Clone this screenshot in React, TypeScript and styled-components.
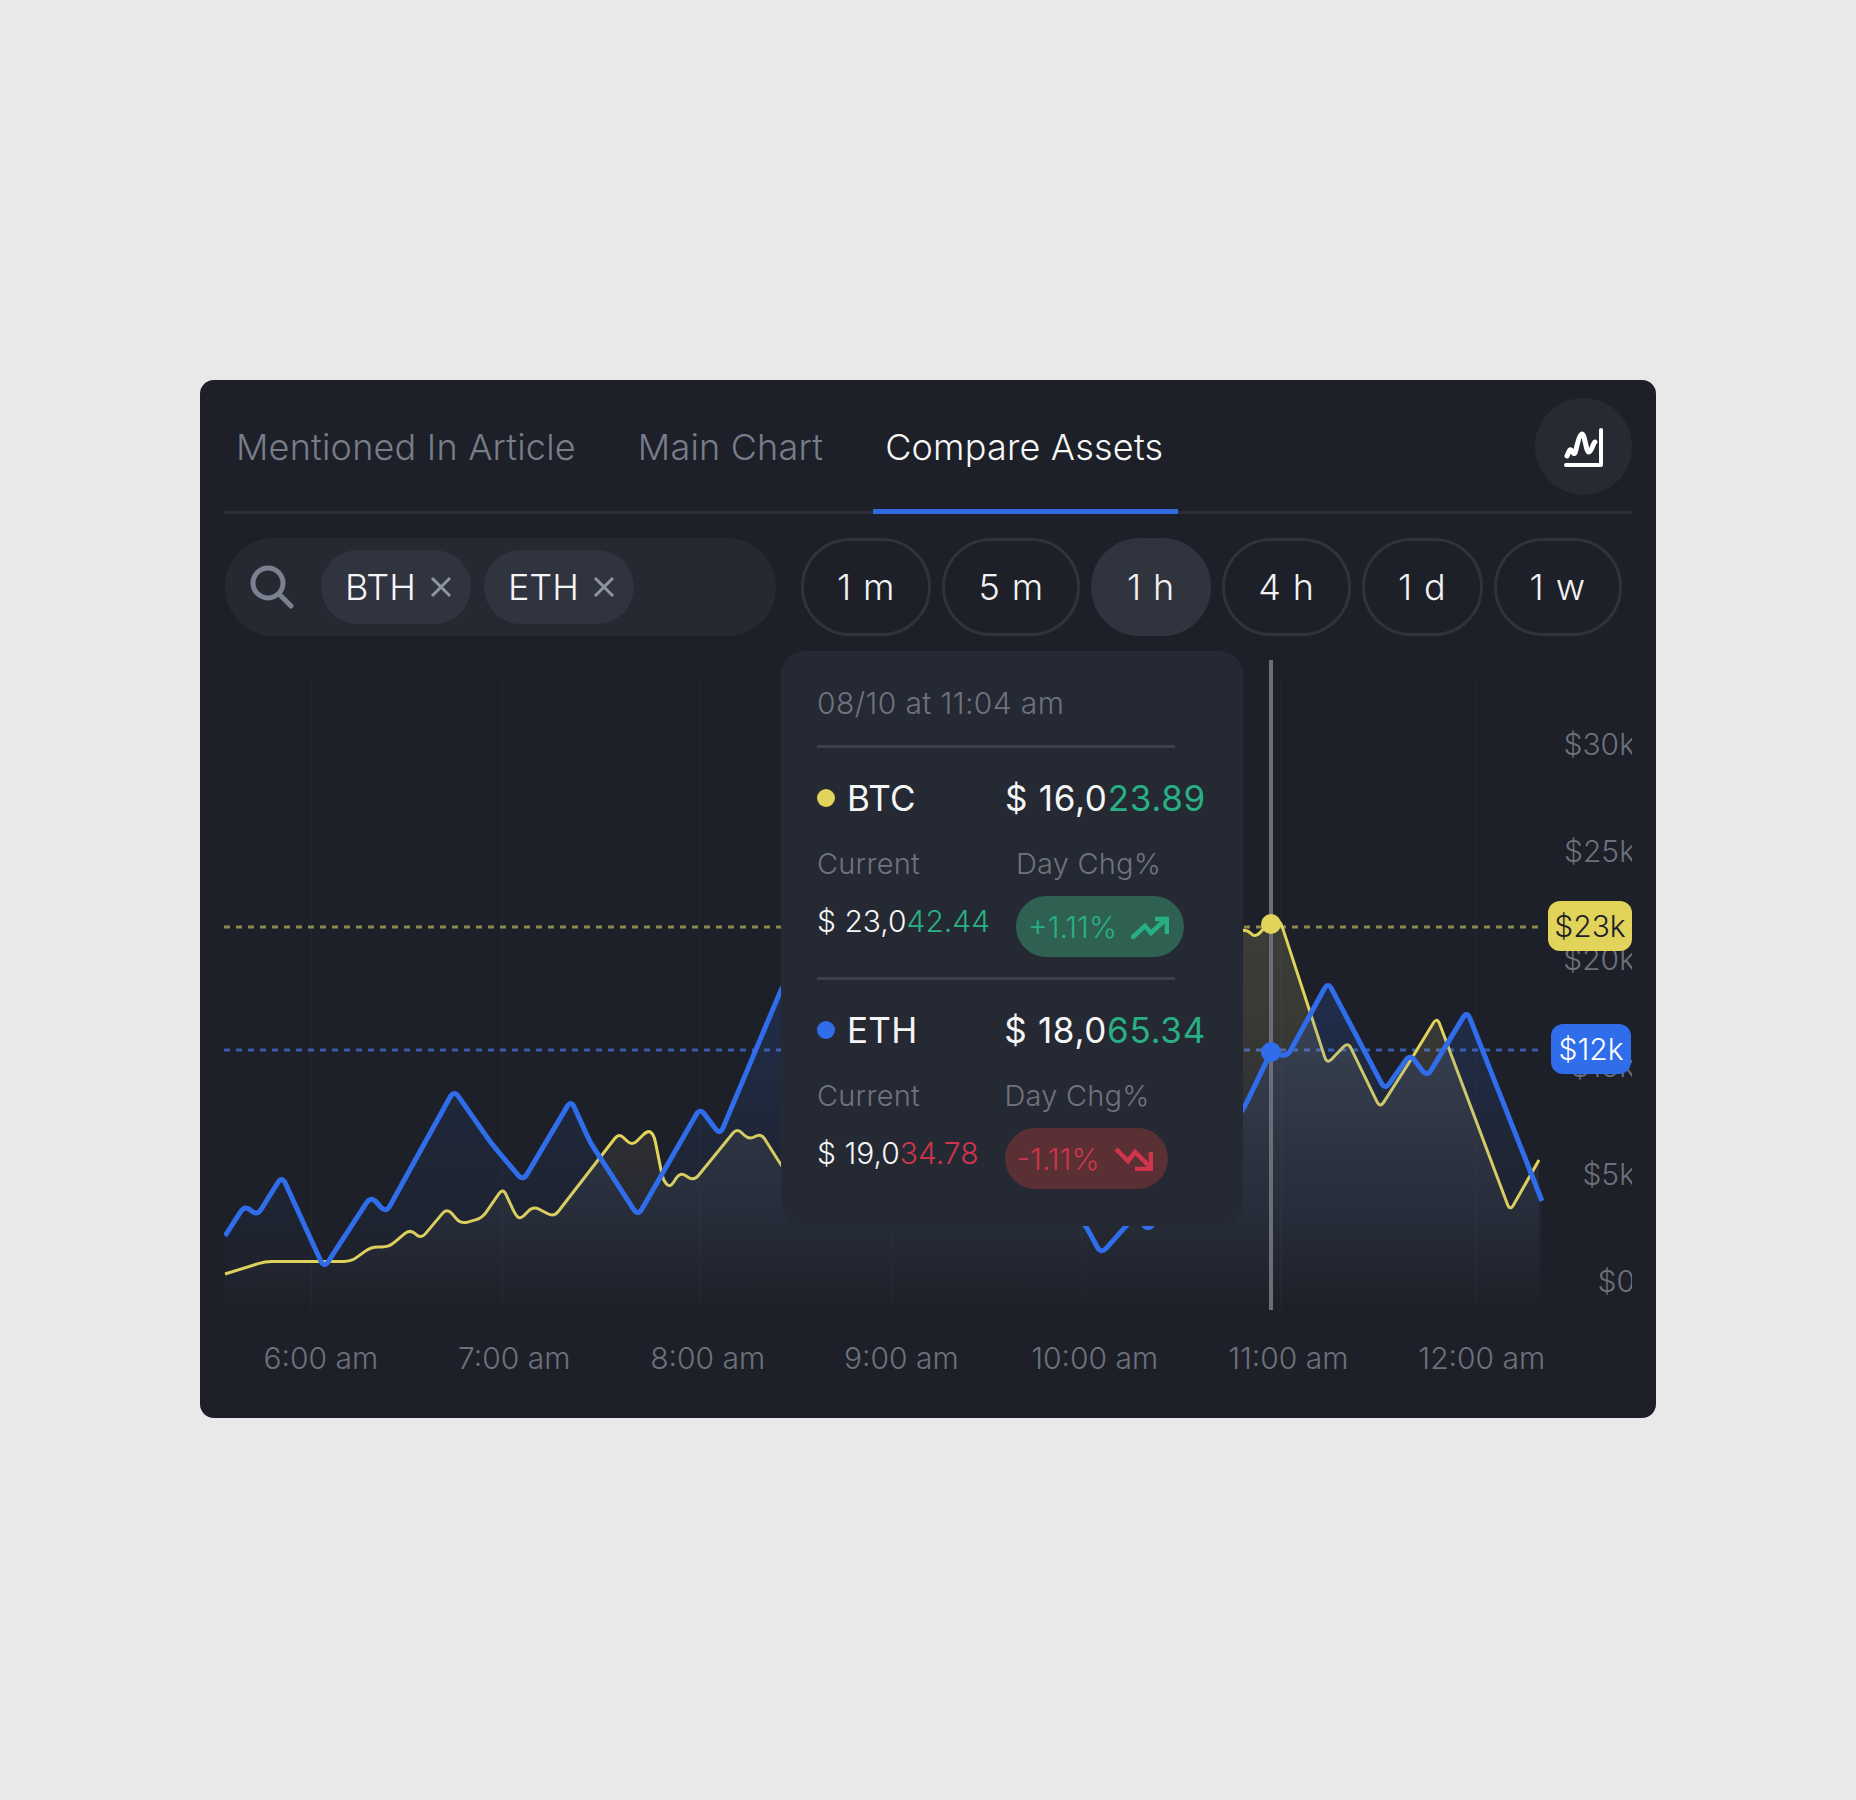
import styled, { createGlobalStyle } from "styled-components";

const GlobalStyle = createGlobalStyle`
  * { box-sizing: border-box; }
  body {
    margin: 0;
    background: #e9e9e9;
    font-family: "Inter", "Liberation Sans", sans-serif;
  }
`;

const Page = styled.div`
  height: 1798px;
  display: flex;
  align-items: center;
  justify-content: center;
`;

const Card = styled.div`
  width: 1456px;
  height: 1038px;
  padding: 0 24px;
  border-radius: 14px;
  background: #1d2028;
`;

const Header = styled.div`
  height: 134px;
  display: flex;
  align-items: center;
  gap: 38px;
  border-bottom: 3px solid #2a2d35;
`;

const Tab = styled.div<{ $active?: boolean }>`
  position: relative;
  height: 100%;
  padding: 2px 12px 0;
  display: flex;
  align-items: center;
  font-size: 36px;
  font-weight: 300;
  letter-spacing: 0.2px;
  color: ${(props) => (props.$active ? "#f6f6f7" : "#787d8a")};
  &::after {
    content: "";
    display: ${(props) => (props.$active ? "block" : "none")};
    position: absolute;
    left: 0;
    right: -3px;
    bottom: -3px;
    height: 5px;
    background: #2f6ae0;
  }
`;

const IconButton = styled.div`
  width: 97px;
  height: 97px;
  margin: 2px 0 0 auto;
  border-radius: 50%;
  background: #272a32;
  display: flex;
  align-items: center;
  justify-content: center;
`;

const Controls = styled.div`
  margin-top: 24px;
  padding-left: 1px;
  display: flex;
  gap: 25px;
`;

const Search = styled.div`
  width: 551px;
  height: 98px;
  flex: none;
  padding-left: 25px;
  border-radius: 49px;
  background: #262932;
  display: flex;
  align-items: center;
  gap: 13px;
`;

const SearchIcon = styled.svg`
  width: 44px;
  height: 44px;
  margin-right: 14px;
  flex: none;
`;

const Chip = styled.div`
  height: 74px;
  padding: 0 19px 0 24px;
  border-radius: 37px;
  background: #30343f;
  display: flex;
  align-items: center;
  gap: 14px;
  font-size: 36px;
  font-weight: 300;
  color: #f6f6f7;
`;

const Frames = styled.div`
  display: flex;
  gap: 11px;
`;

const Frame = styled.div<{ $active?: boolean }>`
  height: 98px;
  padding: 0 33px;
  flex: none;
  white-space: nowrap;
  border-radius: 49px;
  border: 3px solid ${(props) => (props.$active ? "#30343f" : "#30333c")};
  background: ${(props) => (props.$active ? "#30343f" : "transparent")};
  display: flex;
  align-items: center;
  font-size: 36px;
  font-weight: 300;
  letter-spacing: 0.9px;
  color: #f2f2f3;
`;

const ChartArea = styled.div`
  position: relative;
  margin-top: 14px;
  height: 660px;
  display: flex;
`;

const Plot = styled.svg`
  width: 1336px;
  height: 660px;
  flex: none;
`;

const YAxis = styled.div`
  width: 72px;
  padding-top: 40px;
  overflow: hidden;
  display: grid;
  grid-auto-rows: 107.5px;
  align-content: start;
`;

const YLabel = styled.div`
  margin-right: -3px;
  display: flex;
  align-items: center;
  justify-content: flex-end;
  font-size: 30px;
  font-weight: 300;
  color: #6d717c;
`;

const PriceTag = styled.div<{ $bg: string; $fg: string; $top: number; $right: number; $width: number }>`
  position: absolute;
  top: ${(props) => props.$top}px;
  right: ${(props) => props.$right}px;
  width: ${(props) => props.$width}px;
  height: 50px;
  border-radius: 12px;
  background: ${(props) => props.$bg};
  color: ${(props) => props.$fg};
  display: flex;
  align-items: center;
  justify-content: center;
  font-size: 30px;
  font-weight: 300;
`;

const Popup = styled.div`
  position: absolute;
  left: 557px;
  top: 1px;
  width: 462px;
  height: 575px;
  padding: 0 36px;
  border-radius: 24px;
  background: #252933;
`;

const PopupDate = styled.div`
  width: 358px;
  height: 97px;
  padding-top: 10px;
  display: flex;
  align-items: center;
  border-bottom: 3px solid #3d414c;
  font-size: 30px;
  font-weight: 300;
  letter-spacing: 0.4px;
  color: #6f737e;
`;

const Asset = styled.div<{ $divided?: boolean }>`
  height: 232px;
  width: 389px;
  padding-top: 26px;
  position: relative;
  &::after {
    content: "";
    display: ${(props) => (props.$divided ? "block" : "none")};
    position: absolute;
    left: 0;
    bottom: 0;
    width: 358px;
    height: 3px;
    background: #3d414c;
  }
`;

const AssetHead = styled.div`
  height: 48px;
  display: flex;
  align-items: center;
  justify-content: space-between;
  font-size: 35px;
  letter-spacing: 0.3px;
  color: #f6f6f7;
`;

const AssetPrice = styled.span`
  letter-spacing: 0.7px;
`;

const AssetName = styled.div`
  display: flex;
  align-items: center;
  gap: 12px;
`;

const Dot = styled.span<{ $color: string }>`
  width: 18px;
  height: 18px;
  border-radius: 50%;
  background: ${(props) => props.$color};
`;

const Colored = styled.span<{ $color: string }>`
  color: ${(props) => props.$color};
`;

const Details = styled.div`
  margin-top: 23px;
  display: grid;
  grid-template-columns: auto auto;
  justify-content: start;
  column-gap: 26px;
  row-gap: 15px;
`;

const DetailLabel = styled.div`
  height: 36px;
  display: flex;
  align-items: center;
  font-size: 29px;
  font-weight: 300;
  letter-spacing: 0.2px;
  color: #6f737e;
`;

const DetailValue = styled.div`
  height: 50px;
  display: flex;
  align-items: center;
  white-space: pre;
  font-size: 30px;
  font-weight: 300;
  color: #f6f6f7;
`;

const ChangePill = styled.div<{ $bg: string; $color: string }>`
  height: 61px;
  padding: 0 15px 0 12px;
  border-radius: 31px;
  background: ${(props) => props.$bg};
  color: ${(props) => props.$color};
  display: flex;
  align-items: center;
  gap: 14px;
  font-size: 30px;
  font-weight: 300;
  justify-self: start;
`;

const XAxis = styled.div`
  margin-top: 30px;
  display: grid;
  grid-template-columns: repeat(7, 193.5px);
`;

const XLabel = styled.div`
  height: 36px;
  display: flex;
  align-items: center;
  justify-content: center;
  white-space: nowrap;
  font-size: 30px;
  font-weight: 300;
  color: #6d717c;
`;

type Point = [number, number];

const bluePoints: Point[] = [
  [225, 1236], [245, 1205], [257, 1216], [282, 1176], [324, 1268], [371, 1196], [386, 1213],
  [454, 1090], [491, 1143], [523, 1181], [571, 1100], [590, 1142], [638, 1216], [700, 1108],
  [720, 1135], [781, 990], [860, 850], [900, 900], [1000, 1100], [1087, 1228], [1101, 1254],
  [1136, 1215], [1148, 1231], [1160, 1215], [1243, 1110], [1271, 1052], [1287, 1057],
  [1328, 982], [1385, 1090], [1410, 1054], [1427, 1077], [1467, 1011], [1542, 1201],
];

const yellowPoints: Point[] = [
  [225, 1274], [265, 1261.5], [351, 1261.5], [371, 1247], [389, 1247], [410, 1229], [421, 1239],
  [447, 1208], [461, 1224], [482, 1218], [503, 1188], [516, 1216], [521, 1219], [533, 1206],
  [554, 1217], [619, 1133], [632, 1146], [648, 1130], [654, 1135], [663, 1180], [670, 1188],
  [680, 1172], [694, 1181], [737, 1128], [749, 1140], [761, 1133], [781, 1165], [820, 1215],
  [900, 1100], [1000, 1050], [1100, 1000], [1200, 940], [1247, 929], [1255, 938], [1270, 922],
  [1280, 920], [1327, 1064], [1348, 1042], [1380, 1108], [1412, 1058], [1437, 1017], [1510, 1211],
  [1539, 1160],
];

const roundedLine = (points: Point[], radius: number) => {
  let d = `M${points[0][0]} ${points[0][1]}`;
  for (let i = 1; i < points.length - 1; i++) {
    const [x, y] = points[i];
    const [px, py] = points[i - 1];
    const [nx, ny] = points[i + 1];
    const inLen = Math.hypot(x - px, y - py);
    const outLen = Math.hypot(nx - x, ny - y);
    const a = Math.min(radius, inLen / 2) / inLen;
    const b = Math.min(radius, outLen / 2) / outLen;
    d += `L${x - (x - px) * a} ${y - (y - py) * a}Q${x} ${y} ${x + (nx - x) * b} ${y + (ny - y) * b}`;
  }
  const last = points[points.length - 1];
  return `${d}L${last[0]} ${last[1]}`;
};

const areaOf = (points: Point[], line: string) =>
  `${line}L${points[points.length - 1][0]} 1310L${points[0][0]} 1310Z`;

const blueLine = roundedLine(bluePoints, 8);
const yellowLine = roundedLine(yellowPoints, 7);
const gridXs = [311, 502, 699, 893, 1082, 1281, 1475];

function CloseIcon() {
  return (
    <svg width="22" height="22" viewBox="0 0 22 22" fill="none" stroke="#8f95a2" strokeWidth="3">
      <path d="M2 2L20 20M20 2L2 20" />
    </svg>
  );
}

function TrendUp() {
  return (
    <svg width="38" height="24" viewBox="0 0 38 24" fill="none" stroke="#28b084" strokeWidth="4.5" strokeLinecap="round">
      <path d="M2 22L14 11L20 18L35 4" />
      <path d="M24 4H36V19" strokeLinecap="butt" />
    </svg>
  );
}

function TrendDown() {
  return (
    <svg width="39" height="24" viewBox="0 0 39 24" fill="none" stroke="#d0354b" strokeWidth="4.5" strokeLinecap="butt">
      <path d="M2 2L14 14L21 5L36 20" />
      <path d="M21 22H37V5" />
    </svg>
  );
}

function App() {
  return (
    <Page>
      <GlobalStyle />
      <Card>
        <Header>
          <Tab>Mentioned In Article</Tab>
          <Tab>Main Chart</Tab>
          <Tab $active>Compare Assets</Tab>
          <IconButton>
            <svg width="40" height="40" viewBox="0 0 40 40" fill="none" stroke="#fff" strokeLinecap="round" strokeLinejoin="round">
              <path d="M2 38H37V3" strokeWidth="4" />
              <path d="M3 29C5 24 6 22 7 23S10 28 11 26S15 7 18 7S22 26 25 25S29 16 31 15" strokeWidth="5" />
            </svg>
          </IconButton>
        </Header>

        <Controls>
          <Search>
            <SearchIcon viewBox="0 0 44 44" fill="none" stroke="#7b8190" strokeWidth="5" strokeLinecap="round">
              <circle cx="18" cy="18" r="15" />
              <path d="M29 29L41 41" />
            </SearchIcon>
            <Chip>BTH<CloseIcon /></Chip>
            <Chip>ETH<CloseIcon /></Chip>
          </Search>
          <Frames>
            <Frame>1 m</Frame>
            <Frame>5 m</Frame>
            <Frame $active>1 h</Frame>
            <Frame>4 h</Frame>
            <Frame>1 d</Frame>
            <Frame>1 w</Frame>
          </Frames>
        </Controls>

        <ChartArea>
          <Plot viewBox="224 650 1336 660" fill="none">
            <defs>
              <linearGradient id="yellowFill" gradientUnits="userSpaceOnUse" x1="0" y1="920" x2="0" y2="1310">
                <stop offset="0" stopColor="#d8cc80" stopOpacity="0.17" />
                <stop offset="0.25" stopColor="#d8cc80" stopOpacity="0.15" />
                <stop offset="0.59" stopColor="#beaa96" stopOpacity="0.1" />
                <stop offset="0.74" stopColor="#aaaaaa" stopOpacity="0.07" />
                <stop offset="1" stopColor="#aaaaaa" stopOpacity="0" />
              </linearGradient>
              <linearGradient id="blueFill" gradientUnits="userSpaceOnUse" x1="0" y1="920" x2="0" y2="1310">
                <stop offset="0" stopColor="#2f6deb" stopOpacity="0.18" />
                <stop offset="0.25" stopColor="#2f6deb" stopOpacity="0.16" />
                <stop offset="0.59" stopColor="#2f6deb" stopOpacity="0.07" />
                <stop offset="0.74" stopColor="#2f6deb" stopOpacity="0.05" />
                <stop offset="1" stopColor="#2f6deb" stopOpacity="0" />
              </linearGradient>
            </defs>
            {gridXs.map((x) => (
              <path key={x} d={`M${x} 680V1310`} stroke="#20232c" strokeWidth="2" />
            ))}
            <path d="M224 927H1543" stroke="#8d8a50" strokeWidth="3" strokeDasharray="6 6" />
            <path d="M224 1050H1543" stroke="#3b5cad" strokeWidth="3" strokeDasharray="6 6" />
            <path d={areaOf(yellowPoints, yellowLine)} fill="url(#yellowFill)" />
            <path d={yellowLine} stroke="#e2d35a" strokeWidth="3" strokeLinejoin="round" />
            <path d={areaOf(bluePoints, blueLine)} fill="url(#blueFill)" />
            <path d={blueLine} stroke="#2f6deb" strokeWidth="5" strokeLinejoin="round" />
            <path d="M1271 660V1310" stroke="#6b6e77" strokeWidth="4" />
            <circle cx="1271" cy="924" r="10" fill="#e2d35a" />
            <circle cx="1271" cy="1052" r="10" fill="#2f6deb" />
          </Plot>

          <YAxis>
            <YLabel>$30k</YLabel>
            <YLabel>$25k</YLabel>
            <YLabel>$20k</YLabel>
            <YLabel>$15k</YLabel>
            <YLabel>$5k</YLabel>
            <YLabel>$0</YLabel>
          </YAxis>

          <PriceTag $bg="#e2d35a" $fg="#1d2028" $top={251} $right={0} $width={84}>$23k</PriceTag>
          <PriceTag $bg="#2f6deb" $fg="#fff" $top={374} $right={1} $width={80}>$12k</PriceTag>

          <Popup>
            <PopupDate>08/10 at 11:04 am</PopupDate>
            <Asset $divided>
              <AssetHead>
                <AssetName><Dot $color="#e2d35a" />BTC</AssetName>
                <AssetPrice>$ 16,0<Colored $color="#28b084">23.89</Colored></AssetPrice>
              </AssetHead>
              <Details>
                <DetailLabel>Current</DetailLabel>
                <DetailLabel>Day Chg%</DetailLabel>
                <DetailValue>$ 23,0<Colored $color="#28b084">42.44</Colored></DetailValue>
                <ChangePill $bg="#2f6153" $color="#28b084">+1.11%<TrendUp /></ChangePill>
              </Details>
            </Asset>
            <Asset>
              <AssetHead>
                <AssetName><Dot $color="#2f6deb" />ETH</AssetName>
                <AssetPrice>$ 18,0<Colored $color="#28b084">65.34</Colored></AssetPrice>
              </AssetHead>
              <Details>
                <DetailLabel>Current</DetailLabel>
                <DetailLabel>Day Chg%</DetailLabel>
                <DetailValue>$ 19,0<Colored $color="#d0354b">34.78</Colored></DetailValue>
                <ChangePill $bg="#5a3034" $color="#d0354b">-1.11%<TrendDown /></ChangePill>
              </Details>
            </Asset>
          </Popup>
        </ChartArea>

        <XAxis>
          <XLabel>6:00 am</XLabel>
          <XLabel>7:00 am</XLabel>
          <XLabel>8:00 am</XLabel>
          <XLabel>9:00 am</XLabel>
          <XLabel>10:00 am</XLabel>
          <XLabel>11:00 am</XLabel>
          <XLabel>12:00 am</XLabel>
        </XAxis>
      </Card>
    </Page>
  );
}

export default App;
